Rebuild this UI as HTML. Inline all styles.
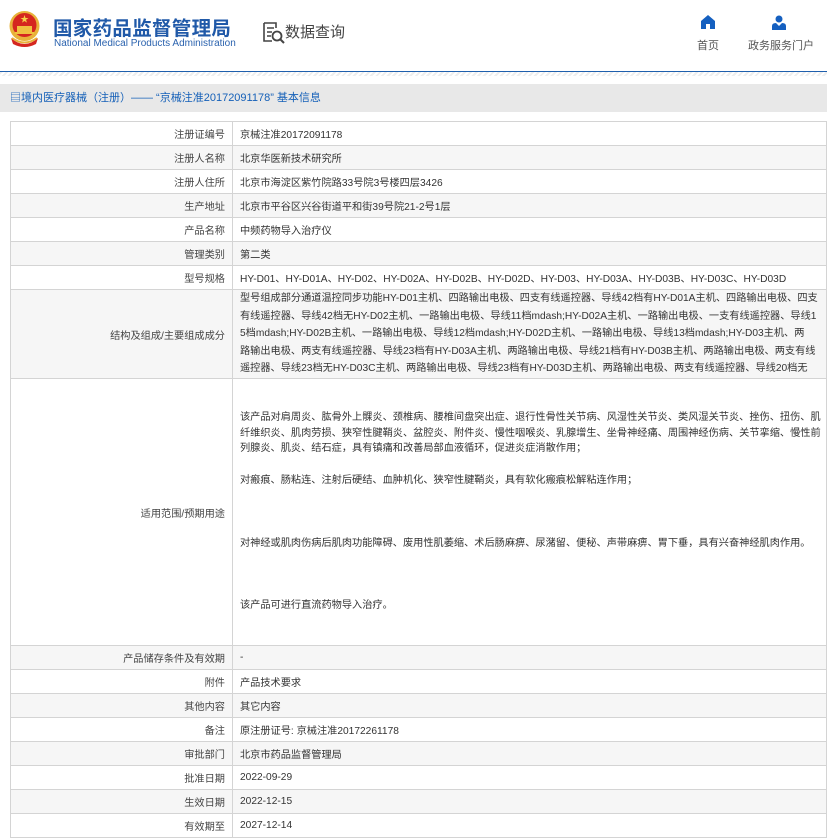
<!DOCTYPE html>
<html><head><meta charset="utf-8">
<style>
*{margin:0;padding:0;box-sizing:border-box}
body{width:827px;height:835px;overflow:hidden;background:#fff;font-family:"Liberation Sans","Noto Sans CJK SC",sans-serif;color:#333;position:relative}
.abs{position:absolute}
.t1{left:53px;top:12px;font-size:19.5px;font-weight:bold;color:#2059a8;letter-spacing:0.3px;white-space:nowrap}
.t2{left:54px;top:38px;font-size:10px;color:#2a62ae;white-space:nowrap}
.nav{font-size:11px;color:#555;white-space:nowrap}
.line{left:0;top:71px;width:827px;height:1px;background:#1f5fad}
.dash{left:0;top:72px;width:827px;height:4px;background:repeating-linear-gradient(135deg,#eee 0 2px,#fff 2px 4px)}
.bar{left:0;top:84px;width:827px;height:28px;background:#e8e8e8;font-size:11px;color:#1560b8;line-height:28px;padding-left:10px;white-space:nowrap}
table{position:absolute;left:10px;top:121px;width:817px;border-collapse:collapse;table-layout:fixed;font-size:10.2px}
td{border:1px solid #d4d4d4;height:24px;padding:0 7px;white-space:nowrap;overflow:hidden;vertical-align:middle}
td.l{text-align:right;width:222px;color:#444}
tr:nth-child(even) td{background:#f6f6f6}
.s td.v{line-height:17.6px;padding:0 7px}
.a td.v{line-height:15.7px;padding:0 7px}
</style></head><body>
<svg class="abs" style="left:7px;top:10px" width="35" height="38" viewBox="0 0 35 38">
<circle cx="17.5" cy="16" r="15" fill="#e8b23a"/>
<circle cx="17.5" cy="15" r="12" fill="#d5261f"/>
<polygon points="17.5,5 18.5,8 21.5,8 19,9.8 20,12.6 17.5,11 15,12.6 16,9.8 13.5,8 16.5,8" fill="#f5d24a"/>
<rect x="10" y="16" width="15" height="6" fill="#f0c040"/>
<rect x="8" y="22" width="19" height="2" fill="#f0c040"/>
<path d="M4 28 Q17.5 40 31 28 L29 34 Q17.5 40 6 34Z" fill="#d5261f"/>
<path d="M5 28 Q17.5 37 30 28" stroke="#e8b23a" stroke-width="2" fill="none"/>
</svg>
<div class="abs t1">国家药品监督管理局</div>
<div class="abs t2">National Medical Products Administration</div>
<svg class="abs" style="left:263px;top:22px" width="22" height="22" viewBox="0 0 22 22">
<path d="M1 1h12v5M1 1v18h8" stroke="#444" stroke-width="1.6" fill="none"/>
<path d="M4 6h7M4 10h5M4 14h4" stroke="#444" stroke-width="1.5"/>
<circle cx="14" cy="14" r="4.5" stroke="#444" stroke-width="1.8" fill="none"/>
<path d="M17 17l4 4" stroke="#444" stroke-width="2"/>
</svg>
<div class="abs" style="left:285px;top:21px;font-size:15px;color:#444;white-space:nowrap">数据查询</div>
<svg class="abs" style="left:701px;top:15px" width="14" height="14" viewBox="0 0 14 14">
<path d="M7 0L0 6v8h5V9h4v5h5V6Z" fill="#1560c0"/></svg>
<div class="abs nav" style="left:697px;top:37px">首页</div>
<svg class="abs" style="left:772px;top:15px" width="14" height="15" viewBox="0 0 14 15">
<circle cx="7" cy="4" r="3.5" fill="#1560c0"/><path d="M0 15V11Q0 8 4 8L7 11L10 8Q14 8 14 11V15Z" fill="#1560c0"/></svg>
<div class="abs nav" style="left:748px;top:37px">政务服务门户</div>
<div class="abs line"></div>
<div class="abs dash"></div>
<div class="abs bar">▤境内医疗器械（注册）—— “京械注准20172091178” 基本信息</div>
<table>
<tr><td class="l">注册证编号</td><td class="v">京械注准20172091178</td></tr>
<tr><td class="l">注册人名称</td><td class="v">北京华医新技术研究所</td></tr>
<tr><td class="l">注册人住所</td><td class="v">北京市海淀区紫竹院路33号院3号楼四层3426</td></tr>
<tr><td class="l">生产地址</td><td class="v">北京市平谷区兴谷街道平和街39号院21-2号1层</td></tr>
<tr><td class="l">产品名称</td><td class="v">中频药物导入治疗仪</td></tr>
<tr><td class="l">管理类别</td><td class="v">第二类</td></tr>
<tr><td class="l">型号规格</td><td class="v">HY-D01、HY-D01A、HY-D02、HY-D02A、HY-D02B、HY-D02D、HY-D03、HY-D03A、HY-D03B、HY-D03C、HY-D03D</td></tr>
<tr class="s"><td class="l" style="height:89px">结构及组成/主要组成成分</td><td class="v">型号组成部分通道温控同步功能HY-D01主机、四路输出电极、四支有线遥控器、导线42档有HY-D01A主机、四路输出电极、四支<br>有线遥控器、导线42档无HY-D02主机、一路输出电极、导线11档mdash;HY-D02A主机、一路输出电极、一支有线遥控器、导线1<br>5档mdash;HY-D02B主机、一路输出电极、导线12档mdash;HY-D02D主机、一路输出电极、导线13档mdash;HY-D03主机、两<br>路输出电极、两支有线遥控器、导线23档有HY-D03A主机、两路输出电极、导线21档有HY-D03B主机、两路输出电极、两支有线<br>遥控器、导线23档无HY-D03C主机、两路输出电极、导线23档有HY-D03D主机、两路输出电极、两支有线遥控器、导线20档无</td></tr>
<tr class="a"><td class="l" style="height:267px">适用范围/预期用途</td><td class="v"><br>该产品对肩周炎、肱骨外上髁炎、颈椎病、腰椎间盘突出症、退行性骨性关节病、风湿性关节炎、类风湿关节炎、挫伤、扭伤、肌<br>纤维织炎、肌肉劳损、狭窄性腱鞘炎、盆腔炎、附件炎、慢性咽喉炎、乳腺增生、坐骨神经痛、周围神经伤病、关节挛缩、慢性前<br>列腺炎、肌炎、结石症，具有镇痛和改善局部血液循环，促进炎症消散作用；<br><br>对瘢痕、肠粘连、注射后硬结、血肿机化、狭窄性腱鞘炎，具有软化瘢痕松解粘连作用；<br><br><br><br>对神经或肌肉伤病后肌肉功能障碍、废用性肌萎缩、术后肠麻痹、尿潴留、便秘、声带麻痹、胃下垂，具有兴奋神经肌肉作用。<br><br><br><br>该产品可进行直流药物导入治疗。<br><br></td></tr>
<tr><td class="l">产品储存条件及有效期</td><td class="v">-</td></tr>
<tr><td class="l">附件</td><td class="v">产品技术要求</td></tr>
<tr><td class="l">其他内容</td><td class="v">其它内容</td></tr>
<tr><td class="l">备注</td><td class="v">原注册证号: 京械注准20172261178</td></tr>
<tr><td class="l">审批部门</td><td class="v">北京市药品监督管理局</td></tr>
<tr><td class="l">批准日期</td><td class="v">2022-09-29</td></tr>
<tr><td class="l">生效日期</td><td class="v">2022-12-15</td></tr>
<tr><td class="l">有效期至</td><td class="v">2027-12-14</td></tr>
</table>
</body></html>
